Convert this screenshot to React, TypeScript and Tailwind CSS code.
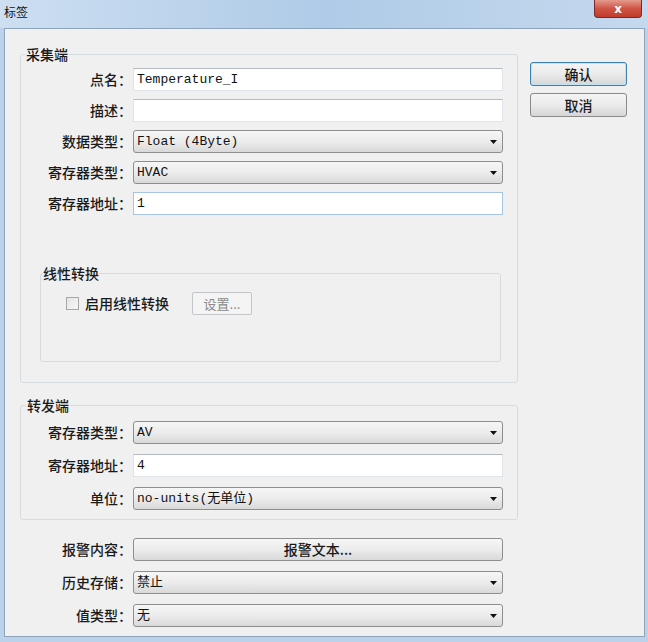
const cjk = "font-[family-name:'Noto_Sans_CJK_SC',sans-serif]";
const mono = "font-[family-name:'Liberation_Mono','Noto_Sans_CJK_SC',monospace]";

function Label({ children }: { children: string }) {
  return (
    <span className={`w-[111px] shrink-0 text-right text-[14px] font-medium leading-[23px] text-[#1a1a1a] ${cjk}`}>
      {children}
    </span>
  );
}

function TextBox({ value, focus }: { value?: string; focus?: boolean }) {
  return (
    <div
      className={`flex h-[23px] w-[370px] items-center bg-white pl-[3px] text-[13px] text-[#111] ${mono} ${
        focus ? "border border-[#a6c5e5]" : "border border-[#dfe4ea] border-t-[#b4bac1]"
      }`}
    >
      {value}
    </div>
  );
}

function Select({ value }: { value: string }) {
  return (
    <div
      className={`flex h-[23px] w-[370px] items-center rounded-[3px] border border-[#8e8e8e] bg-linear-to-b from-[#f6f6f6] via-[#ececec] to-[#d9d9d9] pl-[3px] pr-[5px] text-[13px] text-[#111] ${mono}`}
    >
      <span className="flex-1">{value}</span>
      <svg width="7" height="4" viewBox="0 0 7 4">
        <path d="M0 0h7L3.5 4z" fill="#111" />
      </svg>
    </div>
  );
}

function Row({ label, children }: { label: string; children: React.ReactNode }) {
  return (
    <div className="flex items-center gap-[1px]">
      <Label>{label}</Label>
      {children}
    </div>
  );
}

function Button({ children, primary }: { children: string; primary?: boolean }) {
  return (
    <div
      className={`flex h-[24px] w-[97px] items-center justify-center rounded-[3px] border bg-linear-to-b from-[#f4f4f4] via-[#ebebeb] to-[#d6d6d6] text-[14px] font-medium text-[#1a1a1a] ${cjk} ${
        primary ? "border-[#3c7fb1] shadow-[inset_0_0_0_1px_#bfe4f7]" : "border-[#8a8a8a]"
      }`}
    >
      {children}
    </div>
  );
}

export default function App() {
  return (
    <div className="flex h-[642px] w-[648px] flex-col bg-[#bcd2ea]">
      {/* title bar */}
      <div className="flex h-[28px] shrink-0 items-start justify-between bg-linear-to-r from-[#cddff1] via-[#afcbe7] to-[#c5d9ee]">
        <span className={`pl-[4px] pt-[5px] text-[12px] leading-[14px] text-[#111] ${cjk}`}>标签</span>
        <div className="mr-[6px] flex h-[18px] w-[48px] items-center justify-center rounded-b-[4px] border border-t-0 border-[#7a2a24] bg-linear-to-b from-[#e49a8c] via-[#cf5445] to-[#c03c2c] text-[12px] font-bold leading-none text-white">
          <span className="font-[family-name:'DejaVu_Sans',sans-serif]">x</span>
        </div>
      </div>

      {/* client area */}
      <div className="mb-[5px] ml-[4px] mr-[3px] flex flex-1 border border-[#8fa3ba] bg-[#f0f0f0]">
        <div className="flex flex-col pl-[15px] pt-[17px]">
          {/* 采集端 */}
          <fieldset className="w-[498px] rounded-[3px] border border-[#d5dcdf] pb-[20px]">
            <legend className={`ml-[4px] px-[1px] text-[14px] font-medium leading-[16px] text-[#1a1a1a] ${cjk}`}>采集端</legend>
            <div className="flex flex-col gap-[8px] pt-[6px]">
              <Row label="点名：">
                <TextBox value="Temperature_I" />
              </Row>
              <Row label="描述：">
                <TextBox />
              </Row>
              <Row label="数据类型：">
                <Select value="Float (4Byte)" />
              </Row>
              <Row label="寄存器类型：">
                <Select value="HVAC" />
              </Row>
              <Row label="寄存器地址：">
                <TextBox value="1" focus />
              </Row>
            </div>

            <fieldset className="ml-[19px] mt-[50px] w-[461px] rounded-[3px] border border-[#d5dcdf] pb-[46px]">
              <legend className={`ml-[2px] text-[14px] font-medium leading-[16px] text-[#1a1a1a] ${cjk}`}>线性转换</legend>
              <div className="flex items-center pl-[25px] pt-[11px]">
                <div className="h-[13px] w-[13px] border border-[#a5a7a9] bg-linear-to-br from-[#e4e4e4] to-[#f7f7f7]" />
                <span className={`ml-[6px] text-[14px] font-medium text-[#1a1a1a] ${cjk}`}>启用线性转换</span>
                <div
                  className={`ml-[23px] flex h-[23px] w-[60px] items-center justify-center rounded-[2px] border border-[#c2c6c9] bg-[#f4f4f4] text-[13px] text-[#8a8a8a] ${cjk}`}
                >
                  设置...
                </div>
              </div>
            </fieldset>
          </fieldset>

          {/* 转发端 */}
          <fieldset className="mt-[14px] w-[498px] rounded-[3px] border border-[#d5dcdf] pb-[9px]">
            <legend className={`ml-[5px] px-[1px] text-[14px] font-medium leading-[16px] text-[#1a1a1a] ${cjk}`}>转发端</legend>
            <div className="flex flex-col gap-[10px] pt-[8px]">
              <Row label="寄存器类型：">
                <Select value="AV" />
              </Row>
              <Row label="寄存器地址：">
                <TextBox value="4" />
              </Row>
              <Row label="单位：">
                <Select value="no-units(无单位)" />
              </Row>
            </div>
          </fieldset>

          {/* misc */}
          <div className="flex flex-col gap-[10px] pl-[1px] pt-[18px]">
            <Row label="报警内容：">
              <div
                className={`flex h-[23px] w-[370px] items-center justify-center rounded-[3px] border border-[#8e8e8e] bg-linear-to-b from-[#f6f6f6] via-[#ececec] to-[#d9d9d9] text-[14px] font-medium text-[#1a1a1a] ${cjk}`}
              >
                报警文本...
              </div>
            </Row>
            <Row label="历史存储：">
              <Select value="禁止" />
            </Row>
            <Row label="值类型：">
              <Select value="无" />
            </Row>
          </div>
        </div>

        {/* buttons */}
        <div className="ml-[12px] flex flex-col gap-[7px] pt-[33px]">
          <Button primary>确认</Button>
          <Button>取消</Button>
        </div>
      </div>
    </div>
  );
}
